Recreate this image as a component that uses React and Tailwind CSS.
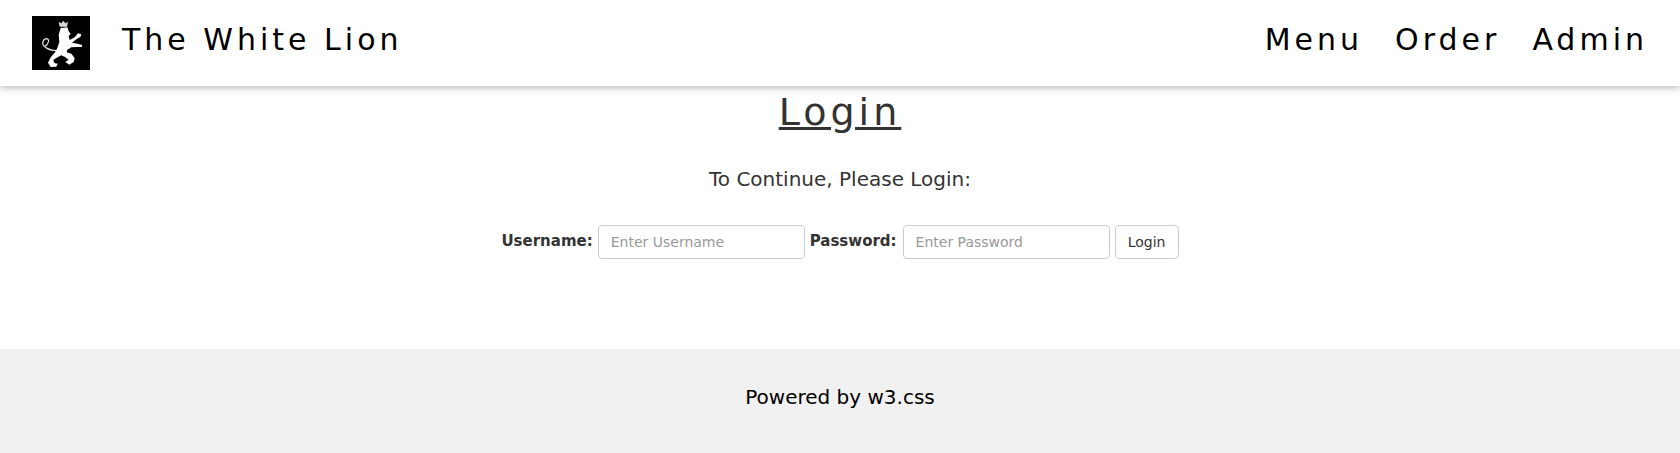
const Lion = () => (
  <svg viewBox="0 0 174 162" className="w-[58px] h-[54px] shrink-0 bg-black">
    {/* crown */}
    <path
      d="M80 17l8 5 6-8 6 8 8-5-3 15h-22z"
      fill="#d8d8d8"
    />
    {/* body */}
    <path
      d="M86 36L106 34L110 46L116 54L110 60L113 72L128 64L138 52L148 55L145 63L134 69L120 80L136 83L151 87L149 93L135 93L118 94L106 101L104 109L118 113L128 126L125 138L112 146L100 138L110 131L99 123L88 118L74 125L64 132L67 141L77 143L73 152L56 153L48 140L56 124L68 110L76 96L82 78L80 56Z"
      fill="white"
    />
    {/* tail */}
    <path
      d="M76 104C60 104 44 98 36 90C28 82 34 68 44 68C54 70 50 84 38 92"
      fill="none"
      stroke="#e8e8e8"
      strokeWidth="3.500"
    />
  </svg>
);

const App = () => {
  return (
    <div className="min-h-[453px] bg-white text-[#333] font-['DejaVu_Sans',sans-serif] text-[15px]">
      <header className="relative z-10 h-[86px] bg-white text-black flex items-center justify-between pl-8 pr-8 shadow-[0_2px_5px_rgba(0,0,0,0.16),0_2px_10px_rgba(0,0,0,0.12)]">
        <div className="flex items-center">
          <Lion />
          <span className="ml-8 pb-2 text-[30px] tracking-[4px]">The White Lion</span>
        </div>
        <nav className="flex items-center gap-8 pb-2 text-[30px] tracking-[4px]">
          <a>Menu</a>
          <a>Order</a>
          <a>Admin</a>
        </nav>
      </header>

      <main className="h-[263px] flex flex-col items-center">
        <h1 className="text-[38px] leading-[52px] tracking-[4px] underline font-normal">Login</h1>
        <p className="mt-[26px] text-[20px] leading-[30px]">To Continue, Please Login:</p>
        <form className="mt-[31px] flex items-start gap-[5px] text-[15px]">
          <label className="font-bold mt-[5px]">Username:</label>
          <input
            placeholder="Enter Username"
            className="w-[207px] h-[34px] px-3 text-[14px] bg-white border border-[#ccc] rounded placeholder:text-[#999]"
          />
          <label className="font-bold mt-[5px] mr-px">Password:</label>
          <input
            placeholder="Enter Password"
            className="w-[207px] h-[34px] px-3 text-[14px] bg-white border border-[#ccc] rounded placeholder:text-[#999]"
          />
          <button className="w-[64px] h-[34px] text-[14px] bg-white border border-[#ccc] rounded">Login</button>
        </form>
      </main>

      <footer className="h-[104px] pb-2 bg-[#f1f1f1] text-black flex items-center justify-center text-[20px]">
        Powered by w3.css
      </footer>
    </div>
  );
};

export default App;
